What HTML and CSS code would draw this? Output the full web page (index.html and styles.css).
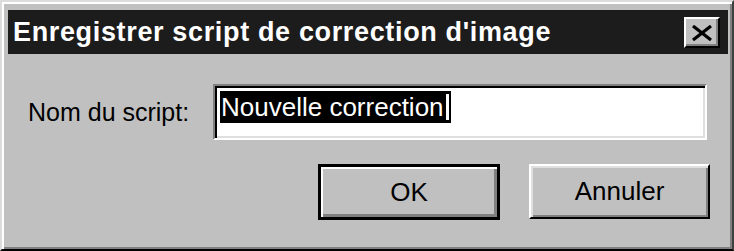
FILE: index.html
```html
<!DOCTYPE html>
<html lang="fr">
<head>
<meta charset="utf-8">
<title>Enregistrer script de correction d'image</title>
<link rel="stylesheet" href="styles.css">
</head>
<body>
<div class="window">
  <div class="titlebar">
    <span class="title">Enregistrer script de correction d'image</span>
    <span class="close" aria-label="Fermer">
      <svg width="22" height="16" viewBox="0 0 22 16"><path d="M2 1 L20 15 M20 1 L2 15" stroke="#000" stroke-width="3.2" fill="none"/></svg>
    </span>
  </div>
  <div class="content">
    <div class="field-row">
      <label class="label">Nom du script:</label>
      <div class="input"><span class="sel">Nouvelle correction<span class="caret"></span></span></div>
    </div>
    <div class="buttons">
      <div class="btn btn-default">OK</div>
      <div class="btn">Annuler</div>
    </div>
  </div>
</div>
</body>
</html>
```
FILE: styles.css
```css
html, body {
  margin: 0;
  padding: 0;
  background: #c0c0c0;
}
.window {
  width: 734px;
  height: 251px;
  box-sizing: border-box;
  border-style: solid;
  border-width: 2px;
  border-color: #dcdcdc #404040 #000 #dcdcdc;
  box-shadow: inset 2px 2px #fff, inset -2px -2px #808080;
  background: #c0c0c0;
  padding: 8px 4px 0 6px;
  font-family: "Liberation Sans", Arial, sans-serif;
}
.titlebar {
  height: 44px;
  background: #1c1c1c;
  display: flex;
  align-items: center;
  justify-content: space-between;
  padding: 0 8px 0 5px;
}
.title {
  color: #fff;
  font-weight: bold;
  font-size: 27px;
  letter-spacing: 0.65px;
  white-space: nowrap;
}
.close {
  width: 36px;
  height: 31px;
  box-sizing: border-box;
  background: #c0c0c0;
  border-style: solid;
  border-width: 2px;
  border-color: #fff #000 #000 #fff;
  box-shadow: inset -2px -2px #808080;
  display: flex;
  align-items: center;
  justify-content: center;
  margin-top: 1px;
}
.content {
  padding: 30px 18px 0 20px;
}
.field-row {
  display: flex;
  align-items: center;
  padding-right: 3px;
}
.label {
  width: 185px;
  flex: none;
  font-size: 25px;
  color: #000;
}
.input {
  flex: 1;
  height: 56px;
  box-sizing: border-box;
  background: #fff;
  border-style: solid;
  border-width: 2px;
  border-color: #808080 #fff #fff #808080;
  box-shadow: inset 2px 2px #000, inset -2px -2px #dfdfdf;
  padding: 5px 5px;
  display: flex;
  align-items: flex-start;
}
.sel {
  background: #000;
  color: #fff;
  font-size: 26px;
  line-height: 32px;
  padding: 0 2px 0 1px;
  white-space: nowrap;
  display: inline-flex;
  align-items: center;
}
.caret {
  display: inline-block;
  width: 3px;
  height: 26px;
  background: #fff;
  margin-left: 2px;
}
.buttons {
  display: flex;
  justify-content: flex-end;
  gap: 29px;
  margin-top: 24px;
}
.btn {
  width: 181px;
  height: 55px;
  box-sizing: border-box;
  background: #c0c0c0;
  border-style: solid;
  border-width: 2px;
  border-color: #fff #000 #000 #fff;
  box-shadow: inset 2px 2px #dfdfdf, inset -2px -2px #808080;
  display: flex;
  align-items: center;
  justify-content: center;
  font-size: 26px;
  color: #000;
}
.btn-default {
  width: 182px;
  height: 56px;
  border: 3px solid #000;
  box-shadow: inset 2px 2px #fff, inset -3px -3px #808080;
}
```
